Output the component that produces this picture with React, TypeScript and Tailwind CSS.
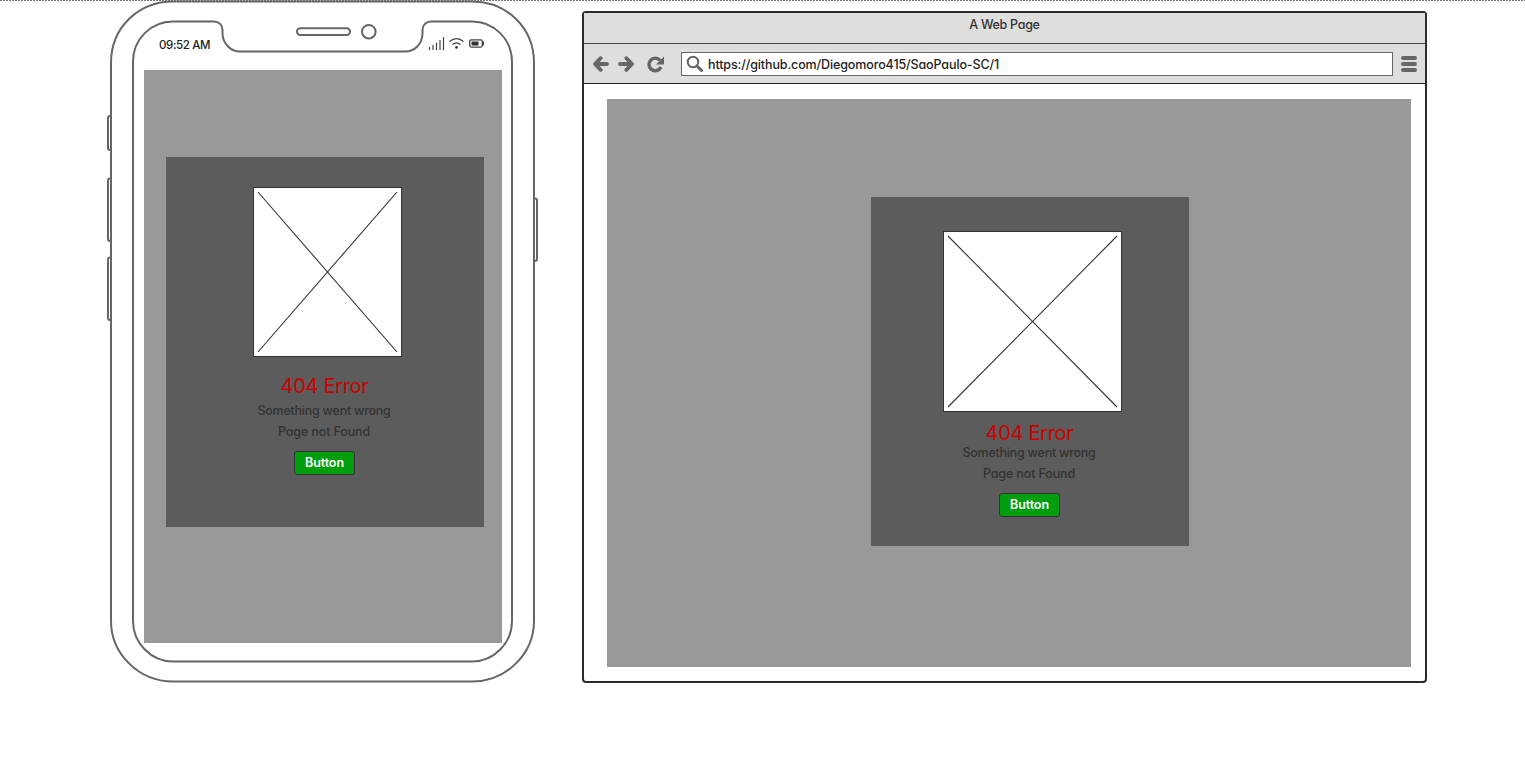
import React from "react";

function Placeholder({ className, w, h }: { className: string; w: number; h: number }) {
  return (
    <div className={`shrink-0 border border-[#333] bg-white ${className}`}>
      <svg width={w - 2} height={h - 2} viewBox={`1 1 ${w - 2} ${h - 2}`} className="block" stroke="#333" strokeWidth="1.1">
        <line x1="5" y1="5" x2={w - 5} y2={h - 5} />
        <line x1={w - 5} y1="5" x2="5" y2={h - 5} />
      </svg>
    </div>
  );
}

function ErrorText({ titleGap }: { titleGap: string }) {
  return (
    <>
      <h1 className={`mr-px text-[20px] leading-6 tracking-[-0.3px] whitespace-nowrap text-[#cc0000] ${titleGap}`}>404 Error</h1>
      <p className="mr-[2px] h-[21px] text-[12.5px] leading-[21px] font-medium tracking-[-0.24px] whitespace-nowrap text-[#333]">Something went wrong</p>
      <p className="mr-[2px] h-[21px] text-[12.5px] leading-[21px] font-medium tracking-[-0.13px] whitespace-nowrap text-[#333]">Page not Found</p>
      <button className="mt-[9px] mr-px h-6 w-[61px] rounded-[3px] border border-[#333] bg-[#009e0f] text-[12.5px] leading-[22px] font-semibold tracking-[-0.1px] text-white">
        Button
      </button>
    </>
  );
}

function PhoneShell() {
  return (
    <svg className="absolute top-0 left-0" width="432" height="684" viewBox="107 0 432 684" fill="none" stroke="#666" strokeWidth="2">
      <path d="M111 63C111 27 139 1.5 173 1.5H472C506 1.5 534 27 534 63V621C534 654 506 681.5 472 681.5H173C139 681.5 111 654 111 621Z" />
      <path d="M133 62C133 39 151 21.5 173 21.5H214C219 21.5 222.5 25 222.5 30V34C223 44 231 51.5 240 51.5H405C415 51.5 422 44 422.5 34V30C422.5 25 426 21.5 431 21.5H472C494 21.5 512 39 512 62V621C512 643 494 661.5 472 661.5H173C151 661.5 133 643 133 621Z" />
      <rect x="297" y="28.2" width="53" height="6.8" rx="3.2" />
      <circle cx="368.8" cy="31.7" r="6.8" />
      <path d="M111 116H110Q108 116 108 118V148Q108 150 110 150H111M111 178.500H110Q108 178.500 108 180.500V239Q108 241 110 241H111M111 257.500H110Q108 257.500 108 259.500V318Q108 320 110 320H111M534 198.500H535Q537 198.500 537 200.500V259Q537 261 535 261H534" />
    </svg>
  );
}

function StatusIcons() {
  return (
    <svg width="58" height="16" viewBox="428 36 58 16" fill="none" stroke="#444">
      <path d="M429.500 47V50M433 45V50M436.500 42.500V50M440 40V50M443.500 37V50" strokeWidth="1.2" />
      <path d="M449.500 41.500Q456.500 35.800 463.500 41.500M452.500 44.600Q456.500 41.200 460.500 44.600" strokeWidth="1.3" />
      <circle cx="456.500" cy="47.400" r="1.4" fill="#333" stroke="none" />
      <rect x="469.700" y="39.800" width="12.600" height="7.400" rx="1.800" strokeWidth="1.300" />
      <rect x="471.500" y="41.500" width="7" height="4" fill="#333" stroke="none" />
      <path d="M483.300 41.500V45.500" strokeWidth="1.400" />
    </svg>
  );
}

function Phone() {
  return (
    <section className="relative ml-[107px] h-[684px] w-[432px] shrink-0 pr-9 pl-[37px]">
      <PhoneShell />
      <div className="flex h-[70px] items-start justify-between pt-9 pr-[17px] pl-[15px]">
        <span className="pt-px text-[11.5px] leading-4 font-medium tracking-[-0.38px] whitespace-nowrap text-[#222]">09:52 AM</span>
        <StatusIcons />
      </div>
      <div className="flex h-[573px] w-[358px] flex-col bg-[#999] pt-[87px] pl-[22px]">
        <div className="flex h-[370px] w-[318px] flex-col items-center bg-[#5c5c5c] pt-[30px]">
          <Placeholder className="ml-[5px] h-[170px] w-[149px]" w={149} h={170} />
          <ErrorText titleGap="mt-[17px] mb-[2px]" />
        </div>
      </div>
    </section>
  );
}

function Toolbar() {
  return (
    <div className="flex h-10 items-center border-b border-[#222] bg-[#dededc] pl-2">
      <svg width="75" height="20" viewBox="592 54 75 20" fill="none" stroke="#666" strokeWidth="3.8">
        <path d="M607 64H596M600.700 58.200L595 64L600.700 69.800" strokeLinecap="round" strokeLinejoin="round" />
        <path d="M620 64H631M626.300 58.200L632 64L626.300 69.800" strokeLinecap="round" strokeLinejoin="round" />
        <path d="M660 60.300A6.300 6.300 0 1 0 661 67" strokeWidth="3.400" />
        <path d="M664 56.500V64.500H656Z" fill="#666" stroke="none" />
      </svg>
      <div className="ml-[14px] flex h-6 w-[712px] items-center border border-[#666] bg-white pl-1">
        <svg width="18" height="18" viewBox="0 0 18 18" fill="none" stroke="#666">
          <circle cx="7" cy="7" r="5.300" strokeWidth="2" />
          <path d="M11 11L15.500 15.500" strokeWidth="3" strokeLinecap="round" />
        </svg>
        <span className="ml-1 pt-[2px] text-[12.5px] leading-5 font-medium tracking-[-0.12px] whitespace-nowrap text-[#222]">https://github.com/Diegomoro415/SaoPaulo-SC/1</span>
      </div>
      <svg className="ml-2" width="16" height="18" viewBox="0 0 16 18" stroke="#666" strokeWidth="4" strokeLinecap="round">
        <path d="M2 3H14M2 9H14M2 15H14" />
      </svg>
    </div>
  );
}

function BrowserWindow() {
  return (
    <section className="mt-[11px] ml-[43px] h-[672px] w-[845px] shrink-0 rounded-[4px] border-2 border-[#2b2b2b] bg-white">
      <div className="h-[31px] border-b border-[#444] bg-[#dededc] pt-[2px] text-center text-[12.5px] leading-5 font-medium tracking-[-0.3px] text-[#333]">A Web Page</div>
      <Toolbar />
      <div className="mt-[15px] ml-[23px] flex h-[568px] w-[804px] flex-col bg-[#999] pt-[98px] pl-[264px]">
        <div className="flex h-[349px] w-[318px] flex-col items-center bg-[#5c5c5c] pt-[34px]">
          <Placeholder className="ml-[5px] h-[181px] w-[179px]" w={179} h={181} />
          <ErrorText titleGap="mt-[9px] -mb-[3px]" />
        </div>
      </div>
    </section>
  );
}

export default function App() {
  return (
    <main className="relative flex h-[781px] w-[1525px] items-start overflow-hidden bg-white font-['Inter','Liberation_Sans',sans-serif] [font-feature-settings:'cv11']">
      <div className="absolute inset-x-0 top-0 h-px bg-[repeating-linear-gradient(90deg,#777_0_2px,#fff_2px_3px)]" />
      <Phone />
      <BrowserWindow />
    </main>
  );
}
